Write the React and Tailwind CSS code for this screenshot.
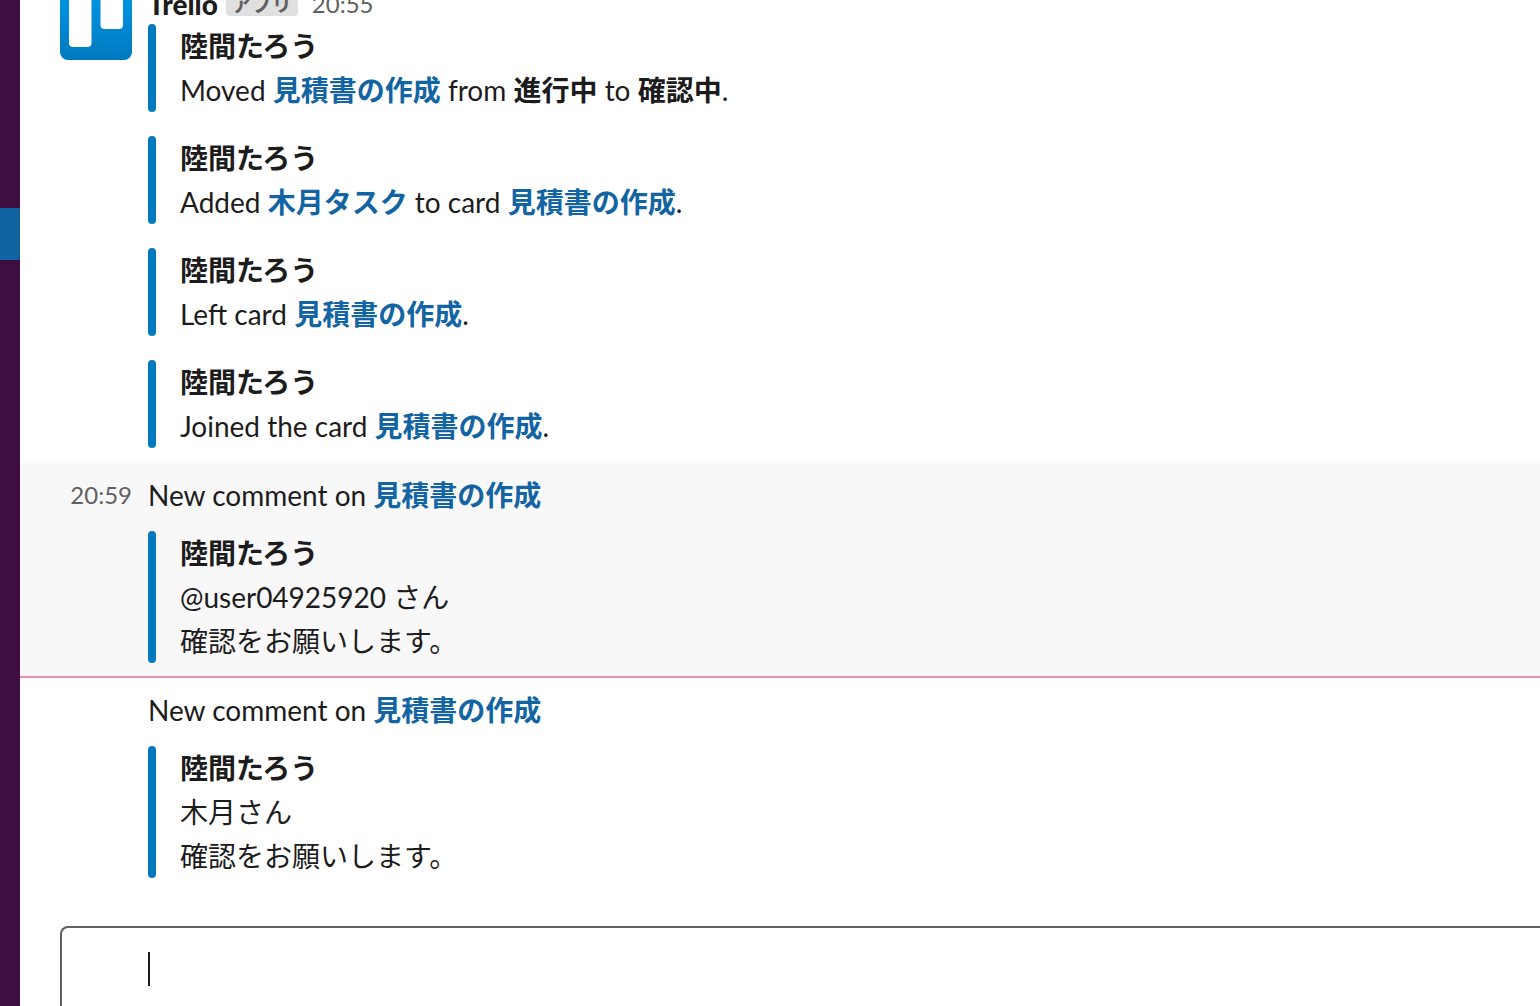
import React from 'react';

const CardLink = ({ children }) => (
  <a href="#card" className="font-bold text-[#1264a3] hover:underline">
    {children}
  </a>
);

const Attachment = ({ author, children }) => (
  <div className="flex gap-6">
    <div className="w-2 shrink-0 rounded-full bg-[#0079bf]" />
    <div>
      <div className="font-bold">{author}</div>
      {children}
    </div>
  </div>
);

const author = '陸間たろう';

const TrelloLogo = () => (
  <svg viewBox="0 0 72 72" className="h-18 w-18" role="img" aria-label="Trello">
    <defs>
      <linearGradient id="trello-blue" x1="0" y1="0" x2="0" y2="1">
        <stop offset="0" stopColor="#0098e6" />
        <stop offset="1" stopColor="#0079bf" />
      </linearGradient>
    </defs>
    <rect width="72" height="72" rx="8" fill="url(#trello-blue)" />
    <rect x="9" y="9" width="22.5" height="50" rx="4" fill="#fff" />
    <rect x="40.5" y="9" width="22.5" height="32" rx="4" fill="#fff" />
  </svg>
);

const App = () => {
  return (
    <div className="flex h-screen overflow-hidden bg-white font-[Lato,'Noto_Sans_CJK_JP',sans-serif] text-[28px] leading-[44px] text-[#1d1c1d]">
      {/* Workspace sidebar */}
      <nav className="w-5 shrink-0 bg-[#3f0e40] pt-52">
        <div className="h-13 border-r-2 border-[#175b97] bg-[#1164a3]" />
      </nav>

      <main className="flex min-w-0 flex-1 flex-col">
        {/* Message with several card updates, scrolled partly out of view */}
        <article className="-mt-5 flex gap-4 pb-[15px] pl-10">
          <div className="mt-2 w-18 shrink-0">
            <TrelloLogo />
          </div>
          <div className="min-w-0 flex-1">
            <header className="flex h-11 items-center gap-2 pt-1">
              <span className="font-black">Trello</span>
              <span className="rounded bg-[#e0e0e0] px-1.5 text-[20px] leading-6 font-bold text-[#616061]">アプリ</span>
              <time className="ml-1.5 text-[24px] text-[#616061]">20:55</time>
            </header>
            <div className="flex flex-col gap-6">
              <Attachment author={author}>
                <p>
                  Moved <CardLink>見積書の作成</CardLink> from <b>進行中</b> to <b>確認中</b>.
                </p>
              </Attachment>
              <Attachment author={author}>
                <p>
                  Added <CardLink>木月タスク</CardLink> to card <CardLink>見積書の作成</CardLink>.
                </p>
              </Attachment>
              <Attachment author={author}>
                <p>
                  Left card <CardLink>見積書の作成</CardLink>.
                </p>
              </Attachment>
              <Attachment author={author}>
                <p>
                  Joined the card <CardLink>見積書の作成</CardLink>.
                </p>
              </Attachment>
            </div>
          </div>
        </article>

        {/* Hovered message */}
        <article className="flex gap-4 bg-[#f8f8f8] pt-2.5 pb-[13px] pl-10">
          <time className="w-18 shrink-0 text-right text-[24px] text-[#616061]">20:59</time>
          <div className="min-w-0 flex-1">
            <p className="mb-3.5">
              New comment on <CardLink>見積書の作成</CardLink>
            </p>
            <Attachment author={author}>
              <p>@user04925920 さん</p>
              <p>確認をお願いします。</p>
            </Attachment>
          </div>
        </article>

        {/* Unread divider */}
        <hr className="border-t-2 border-[#eb8aaa]" />

        <article className="pt-2.5 pl-32">
          <p className="mb-3.5">
            New comment on <CardLink>見積書の作成</CardLink>
          </p>
          <Attachment author={author}>
            <p>木月さん</p>
            <p>確認をお願いします。</p>
          </Attachment>
        </article>

        {/* Message input */}
        <div className="mt-12 ml-10 flex flex-1 items-start rounded-tl-lg border-t-2 border-l-2 border-[#616061] pt-6 pl-[86px]">
          <span className="h-[34px] w-0.5 shrink-0 bg-[#1d1c1d]" />
          <textarea
            aria-label="Message"
            rows={1}
            className="block min-w-0 flex-1 resize-none caret-transparent outline-none"
          />
        </div>
      </main>
    </div>
  );
};

export default App;
